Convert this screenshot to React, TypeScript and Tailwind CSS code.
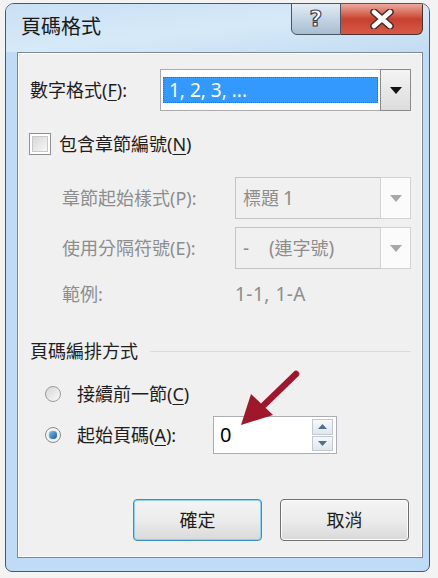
import React from "react";

const FONT = { fontFamily: '"Noto Sans", "Noto Sans CJK TC", sans-serif' };

function U({ children }: { children: React.ReactNode }) {
  return <span className="underline underline-offset-[3px]">{children}</span>;
}

function DropBtn({ disabled }: { disabled?: boolean }) {
  return (
    <div
      className={
        "w-[31px] h-full flex items-center justify-center border " +
        (disabled
          ? "border-[#d2d2d2] bg-[#fbfbfb]"
          : "border-[#8a8a8a] bg-gradient-to-b from-[#f4f4f4] to-[#dcdcdc]")
      }
    >
      <svg width="12" height="7" viewBox="0 0 12 7">
        <polygon points="0,0 12,0 6,7" fill={disabled ? "#a8a8a8" : "#111"} />
      </svg>
    </div>
  );
}

export default function App() {
  return (
    <div className="w-[438px] h-[578px] bg-[#f3f3f3] pt-[3px] pl-[5px]" style={FONT}>
      <div className="w-[425px] h-[569px] rounded-t-[9px] rounded-b-[7px] border border-[#48586a] bg-[#bfdbf5] flex flex-col overflow-hidden">
        {/* title bar */}
        <div className="h-[48px] flex justify-between bg-gradient-to-br from-[#c9e0f4] via-[#d6e9f8] to-[#c3dcf2]">
          <div className="pl-[15px] pt-[9px] text-[20px] leading-[28px] text-[#1a1a1a]">頁碼格式</div>
          <div className="flex -mt-[1px] mr-[6px] h-[32px]">
            <div className="w-[50px] h-full border border-[#4a5562] rounded-bl-[6px] bg-gradient-to-b from-[#e3ecf5] via-[#c4d4e4] to-[#a9bdd1] flex items-center justify-center">
              <span
                className="text-[22px] font-bold leading-none text-white"
                style={{ WebkitTextStroke: "1.2px #3a4552", fontFamily: '"DejaVu Sans", sans-serif' }}
              >
                ?
              </span>
            </div>
            <div className="w-[82px] h-full border border-l-0 border-[#4a3030] rounded-br-[6px] bg-gradient-to-b from-[#eaa99c] via-[#c9402f] to-[#d65a48] flex items-center justify-center">
              <svg width="26" height="20" viewBox="0 0 26 20">
                <path d="M5 3 L21 17 M21 3 L5 17" stroke="#4a2a2a" strokeWidth="7.5" strokeLinecap="round" />
                <path d="M5 3 L21 17 M21 3 L5 17" stroke="#ffffff" strokeWidth="4.5" strokeLinecap="round" />
              </svg>
            </div>
          </div>
        </div>

        {/* content panel */}
        <div className="relative ml-[11px] mr-[6px] h-[506px] border border-[#7d8a96] bg-[#f0f0f0] shadow-[inset_0_0_0_1px_#ffffff] flex flex-col text-[18px] text-[#1e1e1e]">
          {/* row 1 */}
          <div className="flex items-center pl-[12px] mt-[16px] h-[42px]">
            <div className="w-[130px]">
              數字格式(<U>F</U>):
            </div>
            <div className="w-[251px] h-full flex border border-[#a9a9a9] bg-white">
              <div className="flex-1 flex items-stretch py-[7px] pl-[2px] pr-[2px]">
                <div className="flex-1 bg-[#3399ff] text-white flex items-center pl-[5px] leading-none text-[19px] border border-dotted border-[#5a6a7a]">
                  1, 2, 3, ...
                </div>
              </div>
              <div className="-my-[1px] -mr-[1px]">
                <DropBtn />
              </div>
            </div>
          </div>

          {/* row 2 checkbox */}
          <div className="flex items-center pl-[11px] mt-[22px] h-[22px]">
            <div className="w-[22px] h-[22px] border border-[#8e8f8f] bg-white p-[2px]">
              <div className="w-full h-full bg-gradient-to-br from-[#d8d8d8] to-[#f7f7f7] border border-[#c8c8c8]" />
            </div>
            <div className="ml-[8px]">
              包含章節編號(<U>N</U>)
            </div>
          </div>

          {/* row 3 */}
          <div className="flex items-center pl-[44px] mt-[22px] h-[42px] text-[#8d8d8d]">
            <div className="w-[173px]">章節起始樣式(P):</div>
            <div className="w-[176px] h-full flex border border-[#c4c4c4]">
              <div className="flex-1 flex items-center pl-[7px]">
                標題 <span className="text-[19px] ml-[4px]">1</span>
              </div>
              <div className="-my-[1px] -mr-[1px]">
                <DropBtn disabled />
              </div>
            </div>
          </div>

          {/* row 4 */}
          <div className="flex items-center pl-[44px] mt-[8px] h-[42px] text-[#8d8d8d]">
            <div className="w-[173px]">使用分隔符號(E):</div>
            <div className="w-[176px] h-full flex border border-[#c4c4c4]">
              <div className="flex-1 flex items-center pl-[7px] whitespace-pre text-[19px]">
                -    (<span className="text-[18px]">連字號</span>)
              </div>
              <div className="-my-[1px] -mr-[1px]">
                <DropBtn disabled />
              </div>
            </div>
          </div>

          {/* row 5 */}
          <div className="flex items-center pl-[44px] mt-[14px] h-[22px] text-[#8d8d8d]">
            <div className="w-[173px]">範例:</div>
            <div className="text-[19px] tracking-[0.5px]">1-1, 1-A</div>
          </div>

          {/* section */}
          <div className="flex items-center pl-[12px] pr-[11px] mt-[35px] h-[22px]">
            <div>頁碼編排方式</div>
            <div className="flex-1 ml-[12px] h-px bg-[#d5dde4]" />
          </div>

          {/* radio 1 */}
          <div className="flex items-center pl-[27px] mt-[21px] h-[22px]">
            <div className="w-[16px] h-[16px] rounded-full border border-[#9a9a9a] bg-gradient-to-br from-[#d6d6d6] to-[#fafafa]" />
            <div className="ml-[16px]">
              接續前一節(<U>C</U>)
            </div>
          </div>

          {/* radio 2 */}
          <div className="flex items-center pl-[27px] mt-[11px] h-[38px]">
            <div className="w-[16px] h-[16px] rounded-full border border-[#8a8a8a] bg-[#f4f4f4] flex items-center justify-center">
              <div className="w-[8px] h-[8px] rounded-full bg-gradient-to-br from-[#7fc3f0] to-[#0f5a9c] shadow-[0_0_1px_#1c6bb0]" />
            </div>
            <div className="ml-[16px] w-[136px]">
              起始頁碼(<U>A</U>):
            </div>
            <div className="w-[124px] h-full flex border border-[#abadb3] bg-white">
              <div className="flex-1 flex items-center pl-[6px] text-[20px] text-black">0</div>
              <div className="w-[24px] flex flex-col py-[2px] pr-[3px] gap-[1px]">
                <div className="flex-1 border border-[#c2c8d0] bg-gradient-to-b from-[#f6f8fa] to-[#e2e7ec] flex items-center justify-center">
                  <svg width="9" height="5" viewBox="0 0 9 5">
                    <polygon points="0,5 9,5 4.5,0" fill="#4f6f91" />
                  </svg>
                </div>
                <div className="flex-1 border border-[#c2c8d0] bg-gradient-to-b from-[#f6f8fa] to-[#e2e7ec] flex items-center justify-center">
                  <svg width="9" height="5" viewBox="0 0 9 5">
                    <polygon points="0,0 9,0 4.5,5" fill="#4f6f91" />
                  </svg>
                </div>
              </div>
            </div>
          </div>

          {/* buttons */}
          <div className="flex justify-end gap-[18px] pr-[13px] mt-[45px] h-[42px]">
            <div className="w-[129px] h-full rounded-[4px] border border-[#3c8cc6] shadow-[inset_0_0_0_1px_#8fd0f5] bg-gradient-to-b from-[#f4f4f4] via-[#ececec] to-[#d9d9d9] flex items-center justify-center text-[#1e1e1e]">
              確定
            </div>
            <div className="w-[129px] h-full rounded-[4px] border border-[#707070] shadow-[inset_0_0_0_1px_#fcfcfc] bg-gradient-to-b from-[#f4f4f4] via-[#ececec] to-[#d9d9d9] flex items-center justify-center text-[#1e1e1e]">
              取消
            </div>
          </div>

          {/* red arrow annotation */}
          <svg
            className="absolute left-[216px] top-[316px] pointer-events-none"
            width="72"
            height="68"
            viewBox="0 0 72 68"
          >
            <line x1="62" y1="5" x2="30" y2="36" stroke="#a0162b" strokeWidth="6.5" strokeLinecap="round" />
            <polygon points="7,56 17,25 39,46" fill="#a0162b" />
          </svg>
        </div>
      </div>
    </div>
  );
}
